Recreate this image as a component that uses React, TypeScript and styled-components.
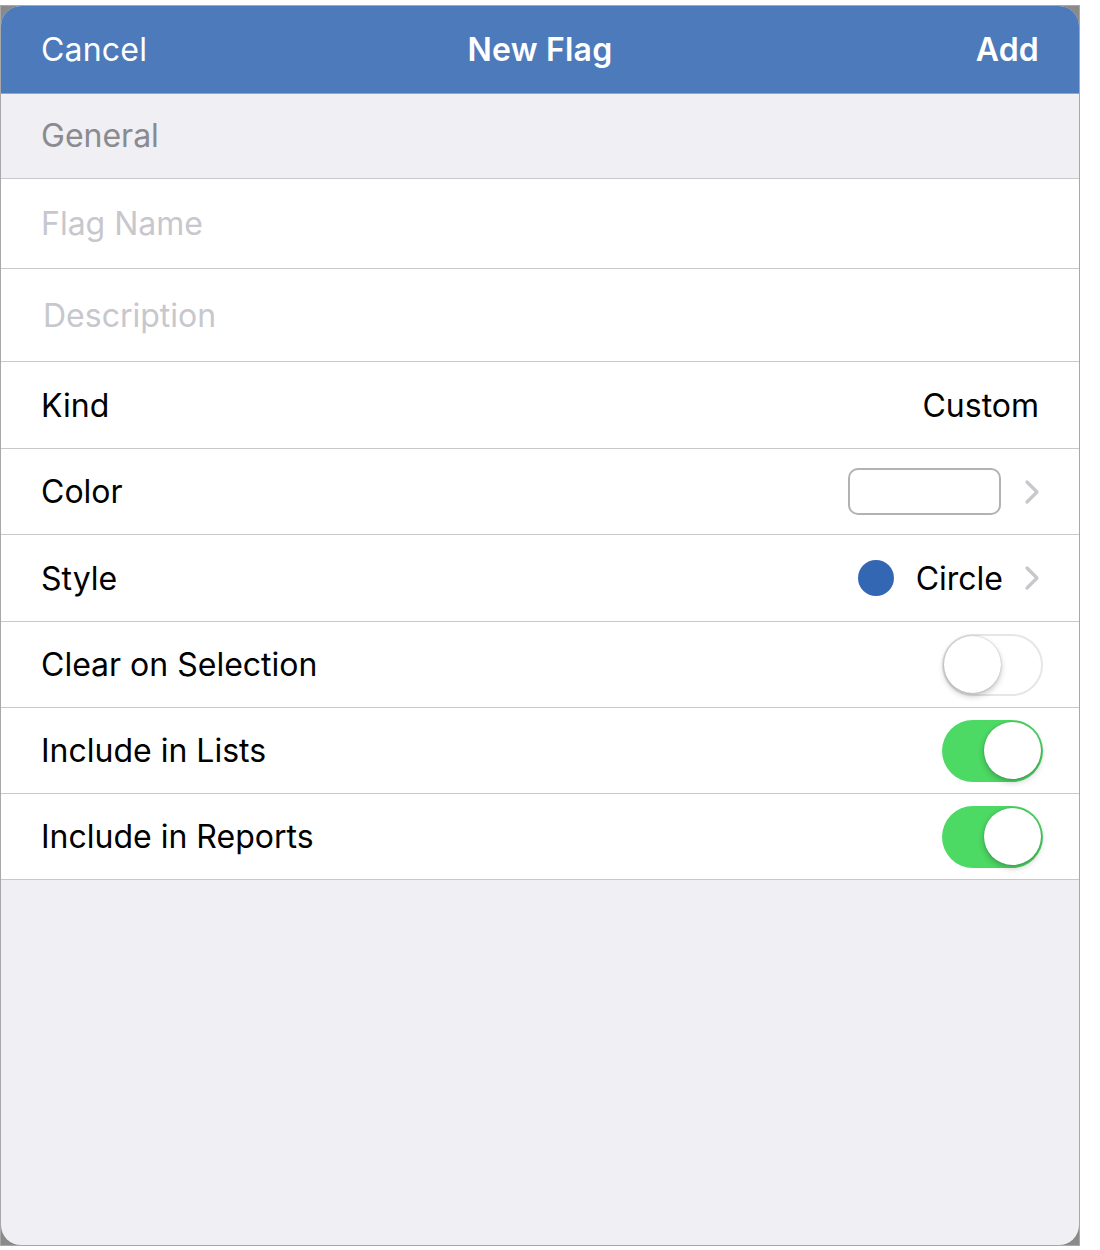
import React from "react";
import styled, { createGlobalStyle } from "styled-components";

const Global = createGlobalStyle`
  html, body { margin: 0; padding: 0; background: #ffffff; }
  body { font-family: Inter, "Liberation Sans", Arial, sans-serif; -webkit-font-smoothing: antialiased; }
  * { box-sizing: border-box; }
`;

const Frame = styled.div`
  margin-top: 5px;
  width: 1080px;
  height: 1241px;
  border: 1px solid #a8a8a8;
  background: #8a8a8a;
`;

const Panel = styled.div`
  height: 100%;
  border-radius: 20px;
  overflow: hidden;
  background: #efeff4;
  display: flex;
  flex-direction: column;
`;

const NavBar = styled.div`
  height: 88px;
  flex-shrink: 0;
  background: #4c7aba;
  border-bottom: 1px solid #a0a4aa;
  display: grid;
  grid-template-columns: 1fr auto 1fr;
  align-items: center;
  padding: 0 40px 0 40px;
  color: #ffffff;
  font-size: 32px;
`;

const NavButton = styled.span<{ $align: "left" | "right"; $bold?: boolean }>`
  justify-self: ${(p) => (p.$align === "left" ? "start" : "end")};
  font-weight: ${(p) => (p.$bold ? 600 : 400)};
  letter-spacing: 0.2px;
`;

const NavTitle = styled.span`
  font-weight: 600;
  letter-spacing: 0.2px;
`;

const SectionHeader = styled.div`
  height: 85px;
  flex-shrink: 0;
  display: flex;
  align-items: center;
  padding-left: 40px;
  padding-bottom: 2px;
  color: #8a8a8f;
  font-size: 32px;
  border-bottom: 1px solid #c8c7cc;
`;

const Row = styled.div<{ $h: number }>`
  height: ${(p) => p.$h}px;
  flex-shrink: 0;
  background: #ffffff;
  border-bottom: 1px solid #c8c7cc;
  display: flex;
  align-items: center;
  justify-content: space-between;
  padding: 0 36px 0 40px;
  font-size: 32px;
  color: #000000;
`;

const Placeholder = styled.span<{ $shift?: number }>`
  color: #c7c7cd;
  margin-left: ${(p) => p.$shift ?? 0}px;
`;

const Label = styled.span``;

const Value = styled.span`
  margin-right: 4px;
`;

const Accessory = styled.div`
  display: flex;
  align-items: center;
`;

const Swatch = styled.div`
  width: 153px;
  height: 47px;
  border: 2px solid #b2b2b2;
  border-radius: 10px;
  background: #ffffff;
  margin-right: 23px;
`;

const Dot = styled.div`
  width: 36px;
  height: 36px;
  border-radius: 50%;
  background: #3366b3;
  margin-right: 22px;
`;

const StyleValue = styled.span`
  margin-right: 21px;
`;

const ChevronBox = styled.svg`
  width: 16px;
  height: 26px;
  margin-right: 3px;
  display: block;
`;

const Track = styled.div<{ $on: boolean }>`
  width: 101px;
  height: 62px;
  border-radius: 31px;
  display: flex;
  align-items: center;
  justify-content: ${(p) => (p.$on ? "flex-end" : "flex-start")};
  background: ${(p) => (p.$on ? "#4cd964" : "#ffffff")};
  border: ${(p) => (p.$on ? "none" : "2px solid #e6e6e6")};
  padding: ${(p) => (p.$on ? "2px" : "0")};
`;

const Knob = styled.div`
  width: 57px;
  height: 57px;
  border-radius: 50%;
  background: #ffffff;
  box-shadow: 0 3px 6px rgba(0, 0, 0, 0.24), 0 0 1.5px rgba(0, 0, 0, 0.3);
`;

const Chevron = () => (
  <ChevronBox viewBox="0 0 16 26">
    <polyline points="3,3 13,13 3,23" fill="none" stroke="#c7c7cc" strokeWidth="3.2" strokeLinecap="round" strokeLinejoin="round" />
  </ChevronBox>
);

const Toggle = ({ on }: { on: boolean }) => (
  <Track $on={on}>
    <Knob />
  </Track>
);

export default function App() {
  return (
    <>
      <Global />
      <Frame>
        <Panel>
          <NavBar>
            <NavButton $align="left">Cancel</NavButton>
            <NavTitle>New Flag</NavTitle>
            <NavButton $align="right" $bold>Add</NavButton>
          </NavBar>
          <SectionHeader>General</SectionHeader>
          <Row $h={90}>
            <Placeholder>Flag Name</Placeholder>
          </Row>
          <Row $h={93}>
            <Placeholder $shift={2}>Description</Placeholder>
          </Row>
          <Row $h={87}>
            <Label>Kind</Label>
            <Value>Custom</Value>
          </Row>
          <Row $h={86}>
            <Label>Color</Label>
            <Accessory>
              <Swatch />
              <Chevron />
            </Accessory>
          </Row>
          <Row $h={87}>
            <Label>Style</Label>
            <Accessory>
              <Dot />
              <StyleValue>Circle</StyleValue>
              <Chevron />
            </Accessory>
          </Row>
          <Row $h={86}>
            <Label>Clear on Selection</Label>
            <Toggle on={false} />
          </Row>
          <Row $h={86}>
            <Label>Include in Lists</Label>
            <Toggle on />
          </Row>
          <Row $h={86}>
            <Label>Include in Reports</Label>
            <Toggle on />
          </Row>
        </Panel>
      </Frame>
    </>
  );
}
